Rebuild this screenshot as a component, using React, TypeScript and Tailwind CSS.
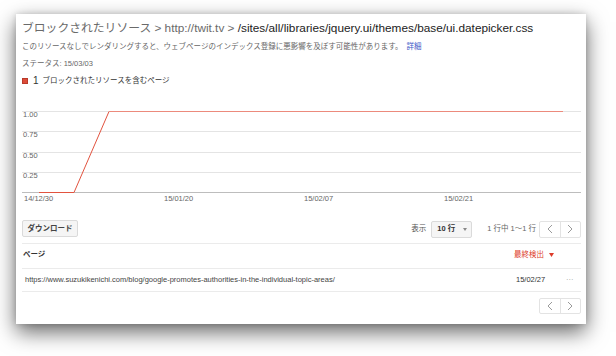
import React from 'react';

const FONT = "font-['Liberation_Sans','Noto_Sans_CJK_JP',sans-serif]";

const GRID = [
  { y: 7.5, label: '1.00', ty: 13 },
  { y: 27.5, label: '0.75', ty: 33 },
  { y: 48.5, label: '0.50', ty: 54 },
  { y: 68.5, label: '0.25', ty: 74 },
];

const X_LABELS = [
  { x: 2, label: '14/12/30' },
  { x: 142, label: '15/01/20' },
  { x: 282, label: '15/02/07' },
  { x: 422, label: '15/02/21' },
];

function Chevron({ dir }: { dir: 'left' | 'right' }) {
  return (
    <svg width="6" height="10" viewBox="0 0 6 10" className="text-[#9a9a9a]">
      <path
        d={dir === 'left' ? 'M5 1 L1 5 L5 9' : 'M1 1 L5 5 L1 9'}
        fill="none"
        stroke="currentColor"
        strokeWidth="1"
      />
    </svg>
  );
}

function Pager({ h }: { h: string }) {
  return (
    <div className={`flex ${h} w-[42px] rounded-[2px] border border-[#e3e3e3] bg-white`}>
      <div className="flex flex-1 items-center justify-center border-r border-[#e3e3e3]">
        <Chevron dir="left" />
      </div>
      <div className="flex flex-1 items-center justify-center">
        <Chevron dir="right" />
      </div>
    </div>
  );
}

function Chart() {
  return (
    <svg width="559" height="100" viewBox="0 0 559 100" className="mt-[17px] block text-[7.5px]">
      {GRID.map((g) => (
        <g key={g.label}>
          <line x1="0" x2="559" y1={g.y} y2={g.y} stroke="#e4e4e4" strokeWidth="1" />
          <text x="1" y={g.ty} fill="#666">{g.label}</text>
        </g>
      ))}
      <line x1="0" x2="559" y1="88.5" y2="88.5" stroke="#bdbdbd" strokeWidth="1" />
      {X_LABELS.map((l) => (
        <text key={l.label} x={l.x} y="97" fill="#666">{l.label}</text>
      ))}
      <line x1="17" x2="52" y1="88.5" y2="88.5" stroke="#e2533f" strokeWidth="1" />
      <line x1="52" x2="87" y1="88.5" y2="7.5" stroke="#e2533f" strokeWidth="1" />
      <line x1="87" x2="541" y1="7.5" y2="7.5" stroke="#ec8a7c" strokeWidth="1" />
    </svg>
  );
}

export default function App() {
  return (
    <div className={`h-[356px] w-[616px] overflow-hidden bg-white pl-[16px] pt-[14px] ${FONT}`}>
      <div className="h-[310px] w-[570px] bg-white pl-[6px] pr-[5px] pt-[6px] shadow-[0_8px_20px_rgba(0,0,0,0.6),0_0_6px_rgba(0,0,0,0.15)]">
        <div className="h-[16px] whitespace-nowrap text-[11.8px] leading-[16px] text-[#222]">
          <span className="text-[#6a6a6a]">ブロックされたリソース &gt; http://twit.tv &gt; </span>
          /sites/all/libraries/jquery.ui/themes/base/ui.datepicker.css
        </div>
        <p className="mt-[6px] whitespace-nowrap text-[7.5px] leading-[10px] text-[#666]">
          このリソースなしでレンダリングすると、ウェブページのインデックス登録に悪影響を及ぼす可能性があります。
          <span className="ml-[4px] text-[#3b58c8]">詳細</span>
        </p>
        <p className="mt-[7px] text-[7.5px] leading-[10px] text-[#666]">ステータス: 15/03/03</p>
        <div className="mt-[6px] flex h-[12px] items-center">
          <span className="h-[6px] w-[6px] border border-[#b93a2a] bg-[#dd4b39]" />
          <span className="ml-[5px] text-[10px] leading-[12px] text-[#333]">1</span>
          <span className="ml-[4px] text-[7.5px] leading-[10px] text-[#333]">ブロックされたリソースを含むページ</span>
        </div>

        <Chart />

        <div className="mt-[16px] flex h-[24px] items-start border-b border-[#ebebeb]">
          <button className="flex h-[17px] w-[56px] items-center justify-center rounded-[2px] border border-[#dadada] bg-[#f5f5f5] text-[7.5px] font-bold text-[#444]">
            ダウンロード
          </button>
          <div className="ml-auto flex h-[18px] items-center text-[7.5px] text-[#555]">
            <span>表示</span>
            <div className="ml-[5px] flex h-[17px] w-[41px] items-center rounded-[2px] border border-[#dadada] bg-[#f5f5f5] pl-[5px]">
              <span className="font-bold text-[#333]">10 行</span>
              <svg width="4" height="3" viewBox="0 0 4 3" className="ml-auto mr-[4px]">
                <path d="M0 0 L4 0 L2 3 Z" fill="#888" />
              </svg>
            </div>
            <span className="ml-[15px] text-[#666]">1 行中 1〜1 行</span>
            <div className="ml-[3px]">
              <Pager h="h-[17px]" />
            </div>
          </div>
        </div>

        <div className="flex h-[25px] items-center border-b border-[#ebebeb] pb-[2px] text-[7.5px]">
          <span className="flex-1 pl-[1px] font-bold text-[#333]">ページ</span>
          <span className="flex w-[67px] items-center text-[#dd3b29]">
            最終検出
            <svg width="5" height="4" viewBox="0 0 5 4" className="ml-[5px]">
              <path d="M0 0 L5 0 L2.5 4 Z" fill="#dd3b29" />
            </svg>
          </span>
        </div>

        <div className="flex h-[23px] items-center border-b border-[#ebebeb] text-[7.5px]">
          <span className="flex-1 whitespace-nowrap pl-[3px] text-[#444]">
            https://www.suzukikenichi.com/blog/google-promotes-authorities-in-the-individual-topic-areas/
          </span>
          <span className="w-[50px] text-[#333]">15/02/27</span>
          <span className="w-[15px] text-[#999]">···</span>
        </div>

        <div className="mt-[6px] flex justify-end">
          <Pager h="h-[16px]" />
        </div>
      </div>
    </div>
  );
}
